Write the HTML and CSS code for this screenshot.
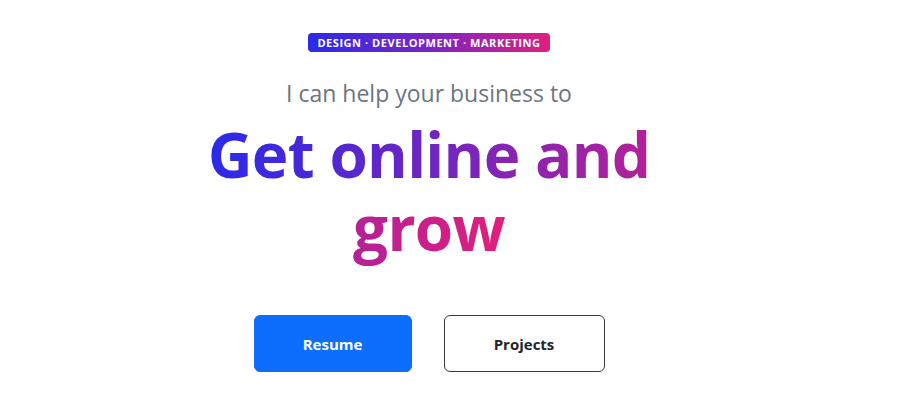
FILE: index.html
```html
<!DOCTYPE html>
<html lang="en">
<head>
<meta charset="utf-8">
<title>Get online and grow</title>
<link rel="stylesheet" href="styles.css">
</head>
<body>
<main class="hero">
  <span class="badge">Design · Development · Marketing</span>
  <p class="lead">I can help your business to</p>
  <h1 class="headline"><span class="grad">Get online and<br>grow</span></h1>
  <div class="actions">
    <a class="btn btn-primary" href="#">Resume</a>
    <a class="btn btn-outline" href="#">Projects</a>
  </div>
</main>
</body>
</html>
```

FILE: styles.css
```css
* { box-sizing: border-box; }
html, body { margin: 0; padding: 0; background: #fff; }
body { font-family: "Open Sans", "Noto Sans", "DejaVu Sans", sans-serif; color: #212529; }

.hero {
  width: 858px;
  display: flex;
  flex-direction: column;
  align-items: center;
  padding-top: 33px;
}

.badge {
  display: inline-block;
  height: 19px;
  line-height: 19px;
  padding: 0 9px;
  border-radius: 4px;
  font-size: 11px;
  font-weight: 700;
  text-transform: uppercase;
  color: #fff;
  letter-spacing: 0.55px;
  background: linear-gradient(90deg, #2a2ae9 0%, #7a25c4 50%, #df1f7f 100%);
}

.lead {
  margin: 27px 0 0;
  font-size: 23px;
  line-height: 29px;
  color: #6c757d;
}

.headline {
  margin: 10px 0 0;
  font-size: 62px;
  font-weight: 700;
  line-height: 73px;
  text-align: center;
  letter-spacing: -0.7px;
}

.grad {
  background: linear-gradient(90deg, #2a2aea 0%, #e21e7c 100%);
  -webkit-background-clip: text;
  background-clip: text;
  color: transparent;
}

.actions {
  display: flex;
  gap: 32px;
  margin-top: 51px;
}

.btn {
  display: inline-flex;
  align-items: center;
  justify-content: center;
  height: 57px;
  border-radius: 6px;
  font-size: 15px;
  font-weight: 700;
  text-decoration: none;
  border: 1px solid transparent;
}

.btn-primary {
  width: 158px;
  background: #0d6efd;
  border-color: #0d6efd;
  color: #fff;
}

.btn-outline {
  width: 161px;
  background: #fff;
  border-color: #343a40;
  color: #212529;
}
```
